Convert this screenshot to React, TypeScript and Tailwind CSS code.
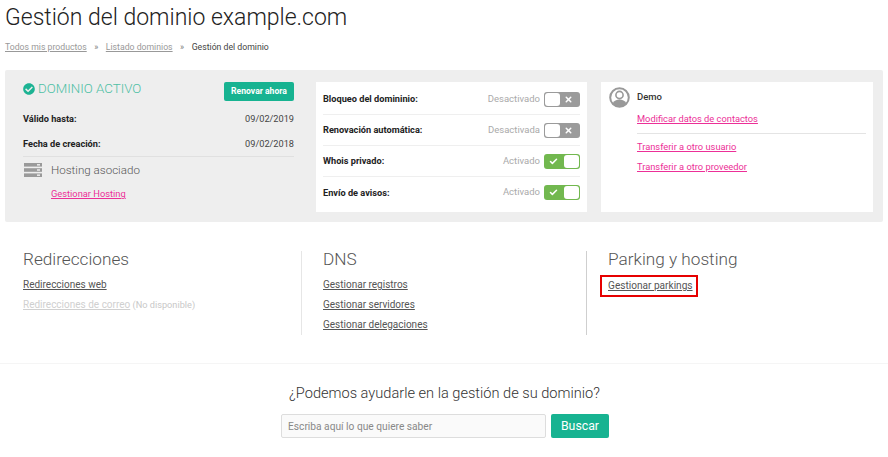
import { Check, X } from "lucide-react"
import { FaCheckCircle } from "react-icons/fa"

const roboto = "font-['Roboto',sans-serif]"

function Toggle({ on }: { on: boolean }) {
  if (on) {
    return (
      <div className="w-[36px] h-[15px] rounded-[3px] bg-[#72b84f] flex items-center justify-between pl-[5px] pr-[1px]">
        <Check className="w-[9px] h-[9px] text-white" strokeWidth={4} />
        <div className="w-[15px] h-[13px] rounded-[3px] bg-white" />
      </div>
    )
  }
  return (
    <div className="w-[36px] h-[15px] rounded-[3px] bg-[#9b9b9b] flex items-center justify-between pl-[1px] pr-[7px]">
      <div className="w-[15px] h-[13px] rounded-[3px] bg-white" />
      <X className="w-[9px] h-[9px] text-white" strokeWidth={4} />
    </div>
  )
}

function OptionRow({ label, status, on, last }: { label: string; status: string; on: boolean; last?: boolean }) {
  return (
    <div className={`h-[31px] flex items-center justify-between ${last ? "" : "border-b border-[#efefef]"}`}>
      <span className="text-[9.2px] font-bold text-[#222]">{label}</span>
      <div className="flex items-center gap-[4px]">
        <span className="text-[9.5px] text-[#aaa]">{status}</span>
        <Toggle on={on} />
      </div>
    </div>
  )
}

function ServerIcon() {
  return (
    <svg width="18" height="14" viewBox="0 0 18 14" className="shrink-0 ml-[1px]">
      <rect x="0" y="0" width="18" height="3.600" fill="#9a9a9a" />
      <rect x="0" y="5.200" width="18" height="3.600" fill="#9a9a9a" />
      <rect x="0" y="10.400" width="18" height="3.600" fill="#9a9a9a" />
      <rect x="13" y="1" width="3" height="1.600" fill="#e6e6e6" />
      <rect x="13" y="6.200" width="3" height="1.600" fill="#e6e6e6" />
      <rect x="13" y="11.400" width="3" height="1.600" fill="#e6e6e6" />
    </svg>
  )
}

function UserIcon() {
  return (
    <svg width="21" height="21" viewBox="0 0 21 21" className="shrink-0">
      <circle cx="10.500" cy="10.500" r="9.300" fill="#fff" stroke="#999" strokeWidth="2" />
      <circle cx="10.500" cy="8" r="3.600" fill="none" stroke="#999" strokeWidth="1.600" />
      <path d="M3.600 16.500c1.500-3 4-4 6.900-4s5.400 1 6.900 4c-1.800 2-4.200 3-6.900 3s-5.100-1-6.900-3z" fill="#999" />
    </svg>
  )
}

export default function App() {
  return (
    <div className={`w-[888px] h-[457px] bg-white overflow-hidden text-[#555] ${roboto}`}>
      <h1 className="pl-[5px] pt-[3px] text-[23px] leading-[30px] font-light text-[#222]">
        Gestión del dominio example.com
      </h1>
      <div className="pl-[5px] mt-[8px] h-[12px] flex items-center text-[8.7px] leading-[12px]">
        <a className="underline text-[#999]">Todos mis productos</a>
        <span className="text-[#777] mx-[7.5px]">»</span>
        <a className="underline text-[#999]">Listado dominios</a>
        <span className="text-[#777] mx-[7.5px]">»</span>
        <span className="text-[#444]">Gestión del dominio</span>
      </div>

      {/* Domain panel */}
      <div className="ml-[5px] mt-[17px] w-[878px] h-[152px] bg-[#eeeeee] rounded-[2px] flex pt-[12px] pl-[18px]">
        <div className="w-[271px] shrink-0">
          <div className="flex items-start justify-between">
            <div className="flex items-center gap-[3px] -mt-[1px]">
              <FaCheckCircle className="w-[12px] h-[12px] text-[#1cb393]" />
              <span className="text-[13.3px] leading-[16px] font-light text-[#4fc0a5]">DOMINIO ACTIVO</span>
            </div>
            <button className="w-[70px] h-[19px] bg-[#17b391] rounded-[2px] text-white text-[8.6px] font-bold">Renovar ahora</button>
          </div>
          <div className="mt-[6px] h-[24px] flex items-center justify-between text-[9.2px]">
            <span className="font-bold text-[#222]">Válido hasta:</span>
            <span className="text-[#444]">09/02/2019</span>
          </div>
          <div className="h-[26px] flex items-center justify-between text-[9.2px] border-b border-[#e0e0e0] pt-[1px] pb-[1px]">
            <span className="font-bold text-[#222]">Fecha de creación:</span>
            <span className="text-[#444]">09/02/2018</span>
          </div>
          <div className="flex items-center gap-[9px] mt-[6px]">
            <ServerIcon />
            <span className="text-[11.6px] leading-[14px] font-light text-[#555]">Hosting asociado</span>
          </div>
          <a className="block ml-[28px] mt-[11px] text-[9.3px] leading-[12px] underline text-[#ec2f97]">Gestionar Hosting</a>
        </div>

        <div className="ml-[22px] w-[271px] h-[130px] bg-white px-[7px] py-[2px] shrink-0">
          <OptionRow label="Bloqueo del domininio:" status="Desactivado" on={false} />
          <OptionRow label="Renovación automática:" status="Desactivada" on={false} />
          <OptionRow label="Whois privado:" status="Activado" on />
          <OptionRow label="Envío de avisos:" status="Activado" on last />
        </div>

        <div className="ml-[14px] w-[272px] h-[130px] bg-white pl-[8px] pr-[7px] pt-[5px] flex gap-[7px] shrink-0">
          <UserIcon />
          <div className="flex-1">
            <div className="text-[9.5px] leading-[12px] font-medium text-[#333] mt-[4px]">Demo</div>
            <a className="block mt-[10px] text-[9.3px] leading-[12px] underline text-[#ec2f97]">Modificar datos de contactos</a>
            <div className="h-px bg-[#e4e4e4] mt-[8px] mb-[7px]" />
            <a className="block text-[9.3px] leading-[12px] underline text-[#ec2f97]">Transferir a otro usuario</a>
            <a className="block mt-[8px] text-[9.3px] leading-[12px] underline text-[#ec2f97]">Transferir a otro proveedor</a>
          </div>
        </div>
      </div>

      {/* Management links */}
      <div className="mt-[29px] pl-[23px] flex h-[84px] text-[10px]">
        <div className="w-[279px] border-r border-[#e6e6e6]">
          <h2 className="text-[17.2px] leading-[16px] font-light text-[#555]">Redirecciones</h2>
          <a className="block mt-[12px] leading-[12px] underline text-[#555]">Redirecciones web</a>
          <div className="mt-[8px] leading-[12px]">
            <a className="underline text-[#d0d0d0]">Redirecciones de correo</a>
            <span className="text-[#c8c8c8] text-[9.2px]"> (No disponible)</span>
          </div>
        </div>
        <div className="w-[285px] pl-[21px] border-r border-[#cfcfcf]">
          <h2 className="text-[17.2px] leading-[16px] font-light text-[#555]">DNS</h2>
          <a className="block mt-[12px] leading-[12px] underline text-[#555]">Gestionar registros</a>
          <a className="block mt-[8px] leading-[12px] underline text-[#555]">Gestionar servidores</a>
          <a className="block mt-[8px] leading-[12px] underline text-[#555]">Gestionar delegaciones</a>
        </div>
        <div className="pl-[21px]">
          <h2 className="text-[17.2px] leading-[16px] font-light text-[#555]">Parking y hosting</h2>
          <a className="inline-block mt-[8px] -ml-[8px] pl-[6px] pr-[3px] py-[3px] text-[10.1px] leading-[12px] underline text-[#555] border-2 border-[#e60000]">
            Gestionar parkings
          </a>
        </div>
      </div>

      <div className="mt-[28px] h-px bg-[#f5f5f5]" />

      {/* Help search */}
      <h3 className="mt-[20px] text-center text-[14.6px] leading-[18px] font-light text-[#333] pl-[1px]">
        ¿Podemos ayudarle en la gestión de su dominio?
      </h3>
      <div className="mt-[12px] flex justify-center gap-[5px] pl-[2px]">
        <input
          placeholder="Escriba aquí lo que quiere saber"
          className="w-[265px] h-[24px] px-[6px] bg-[#fafafa] border border-[#dddddd] rounded-[2px] text-[10.2px] placeholder:text-[#888] outline-none"
        />
        <button className="w-[58px] h-[24px] bg-[#17b391] rounded-[2px] text-white text-[12.300px]">Buscar</button>
      </div>
    </div>
  )
}
